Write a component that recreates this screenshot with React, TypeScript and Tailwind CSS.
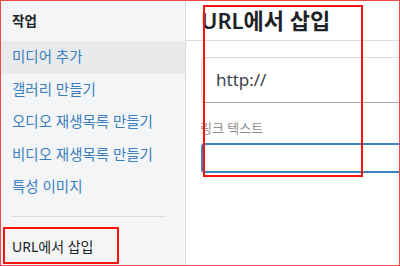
import React from "react";

const font = { fontFamily: '"Noto Sans", "Noto Sans CJK KR", sans-serif' };

const menuItems = [
  { label: "미디어 추가", active: true },
  { label: "갤러리 만들기" },
  { label: "오디오 재생목록 만들기" },
  { label: "비디오 재생목록 만들기" },
  { label: "특성 이미지" },
];

const App: React.FC = () => {
  return (
    <div
      className="relative flex h-[266px] w-[400px] overflow-hidden border border-[#f04a4a] bg-white"
      style={font}
    >
      {/* 사이드바 */}
      <aside className="flex w-[185px] shrink-0 flex-col border-r border-[#dcdcde] bg-[#f3f5f6]">
        <div className="flex h-[40px] items-center px-[11px] text-[13.5px] font-semibold text-[#1d2327]">
          작업
        </div>
        {menuItems.map((item) => (
          <div
            key={item.label}
            className={`flex h-[32.5px] items-center px-[11px] text-[14.5px] text-[#3b7fc0] ${
              item.active ? "bg-[#e9eaeb]" : ""
            }`}
          >
            {item.label}
          </div>
        ))}
        <div className="ml-[11px] mt-[12px] h-px w-[154px] bg-[#dcdcde]" />
        <div className="mt-[14px] flex h-[32px] items-center px-[11px] text-[14px] text-[#1d2327]">
          URL에서 삽입
        </div>
      </aside>

      {/* 본문 */}
      <main className="flex min-w-0 flex-1 flex-col overflow-hidden">
        <div className="flex h-[40px] shrink-0 items-center border-b border-[#dcdcde] pl-[15px] text-[22px] font-semibold text-[#1d2327]">
          URL에서 삽입
        </div>
        <div className="pl-[15px] pt-[16px]">
          <div className="flex h-[46px] w-[240px] items-center rounded-l-[4px] border border-[#dcdcde] border-b-[#a7aaad] pl-[14px] text-[17px] text-[#3c434a]">
            http://
          </div>
          <div className="mt-[16px] -ml-[1px] text-[13px] text-[#8c8f94]">링크 텍스트</div>
          <div className="mt-[4px] h-[30px] w-[240px] rounded-l-[4px] border-2 border-[#3f82c4]" />
        </div>
      </main>

      {/* 빨간 표시 상자 */}
      <div className="pointer-events-none absolute left-[2px] top-[226px] h-[37px] w-[116px] border-2 border-[#ff1010]" />
      <div className="pointer-events-none absolute left-[202px] top-[4px] h-[172px] w-[160px] border-2 border-[#ff1010]" />
    </div>
  );
};

export default App;
